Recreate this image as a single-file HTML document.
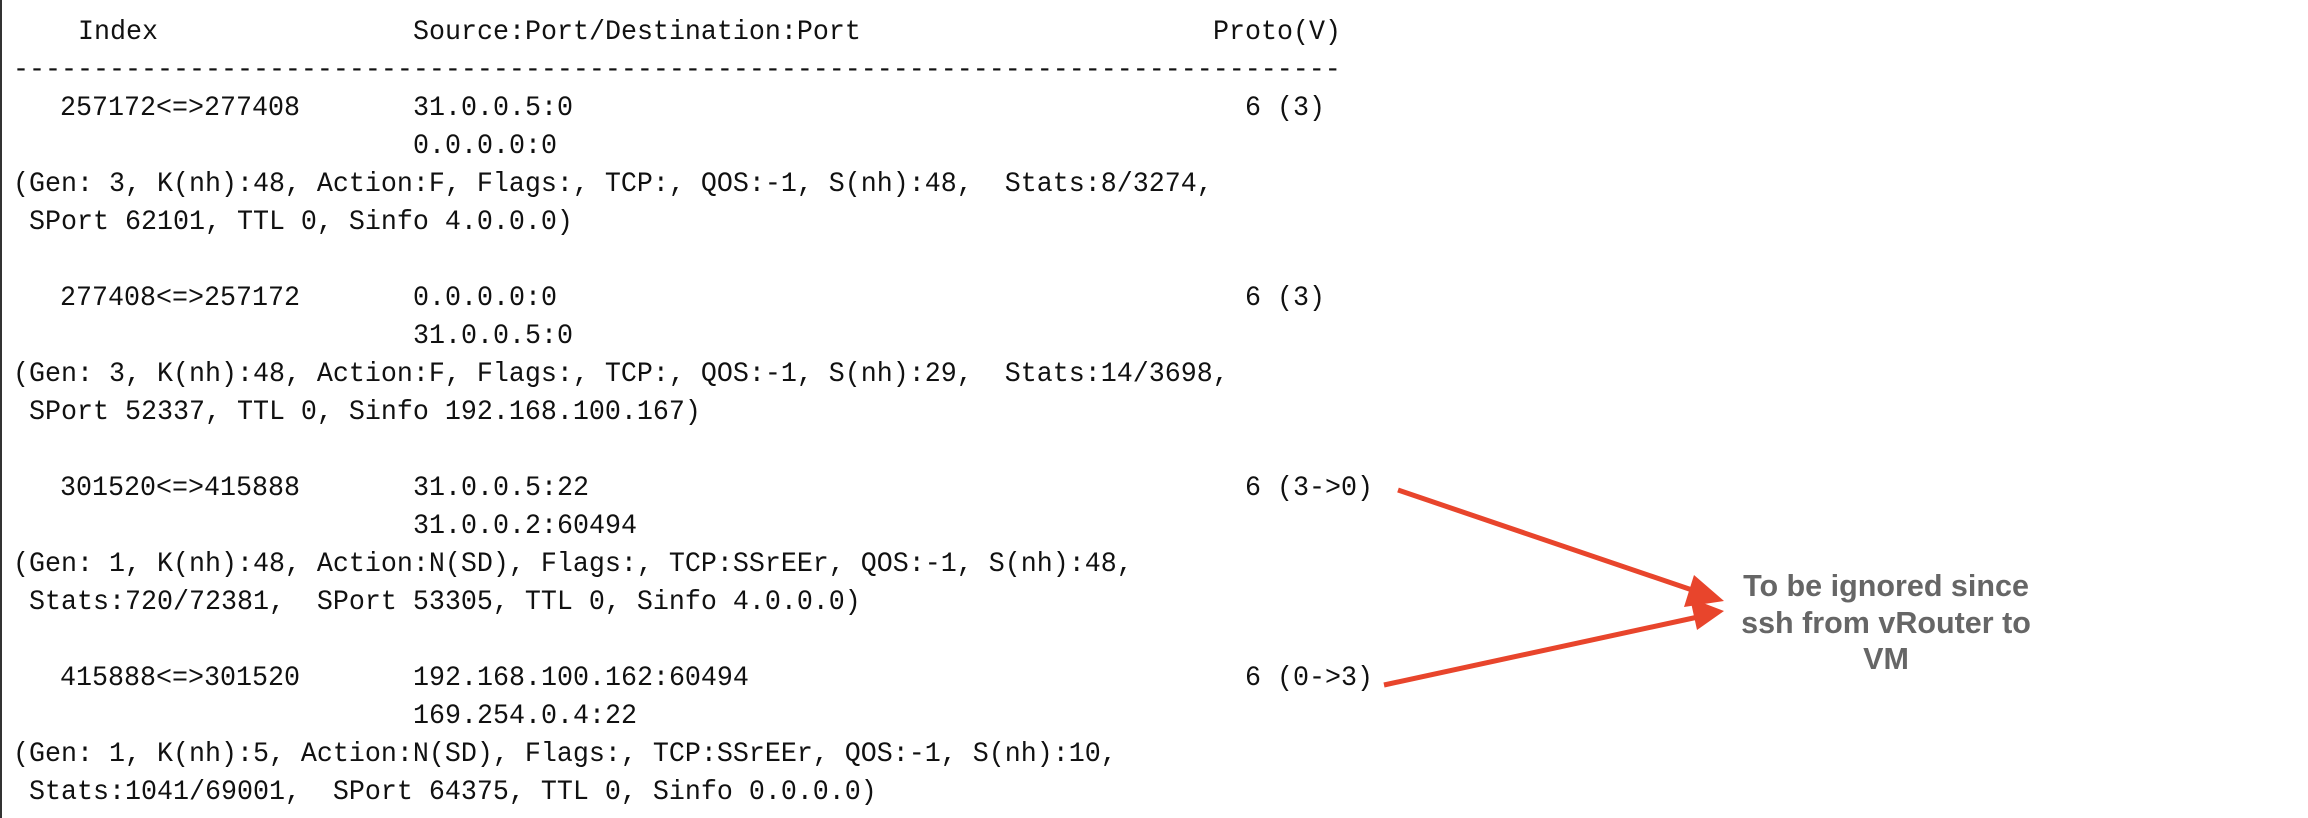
<!DOCTYPE html>
<html><head><meta charset="utf-8"><style>
html,body{margin:0;padding:0;background:#fff;width:2308px;height:818px;overflow:hidden;position:relative}
.b{position:absolute;left:0;top:0;width:2px;height:818px;background:#333}
.t{position:absolute;font-family:"Liberation Mono",monospace;font-size:28px;line-height:38px;white-space:pre;color:#111;transform:scaleX(0.952);transform-origin:0 0}
.n{position:absolute;left:1586px;width:600px;top:568px;text-align:center;font-family:"Liberation Sans",sans-serif;font-weight:bold;font-size:30.5px;line-height:36.5px;color:#666}
</style></head><body>
<div class="b"></div>
<div class="t" style="left:78px;top:14px">Index</div>
<div class="t" style="left:413px;top:14px">Source:Port/Destination:Port</div>
<div class="t" style="left:1213px;top:14px">Proto(V)</div>
<div class="t" style="left:13px;top:52px">-----------------------------------------------------------------------------------</div>

<div class="t" style="left:60px;top:90px">257172&lt;=&gt;277408</div>
<div class="t" style="left:413px;top:90px">31.0.0.5:0
0.0.0.0:0</div>
<div class="t" style="left:1245px;top:90px">6 (3)</div>
<div class="t" style="left:13px;top:166px">(Gen: 3, K(nh):48, Action:F, Flags:, TCP:, QOS:-1, S(nh):48,  Stats:8/3274,
 SPort 62101, TTL 0, Sinfo 4.0.0.0)</div>

<div class="t" style="left:60px;top:280px">277408&lt;=&gt;257172</div>
<div class="t" style="left:413px;top:280px">0.0.0.0:0
31.0.0.5:0</div>
<div class="t" style="left:1245px;top:280px">6 (3)</div>
<div class="t" style="left:13px;top:356px">(Gen: 3, K(nh):48, Action:F, Flags:, TCP:, QOS:-1, S(nh):29,  Stats:14/3698,
 SPort 52337, TTL 0, Sinfo 192.168.100.167)</div>

<div class="t" style="left:60px;top:470px">301520&lt;=&gt;415888</div>
<div class="t" style="left:413px;top:470px">31.0.0.5:22
31.0.0.2:60494</div>
<div class="t" style="left:1245px;top:470px">6 (3-&gt;0)</div>
<div class="t" style="left:13px;top:546px">(Gen: 1, K(nh):48, Action:N(SD), Flags:, TCP:SSrEEr, QOS:-1, S(nh):48,
 Stats:720/72381,  SPort 53305, TTL 0, Sinfo 4.0.0.0)</div>

<div class="t" style="left:60px;top:660px">415888&lt;=&gt;301520</div>
<div class="t" style="left:413px;top:660px">192.168.100.162:60494
169.254.0.4:22</div>
<div class="t" style="left:1245px;top:660px">6 (0-&gt;3)</div>
<div class="t" style="left:13px;top:736px">(Gen: 1, K(nh):5, Action:N(SD), Flags:, TCP:SSrEEr, QOS:-1, S(nh):10,
 Stats:1041/69001,  SPort 64375, TTL 0, Sinfo 0.0.0.0)</div>

<svg width="2308" height="818" style="position:absolute;left:0;top:0">
<g stroke="#e8452c" stroke-width="5" fill="#e8452c">
<line x1="1398" y1="490" x2="1698" y2="592"/>
<polygon points="1724,601 1694,575 1684,607" stroke="none"/>
<line x1="1384" y1="685" x2="1698" y2="617"/>
<polygon points="1724,611 1690,598 1697,630" stroke="none"/>
</g></svg>
<div class="n">To be ignored since<br>ssh from vRouter to<br>VM</div>
</body></html>
